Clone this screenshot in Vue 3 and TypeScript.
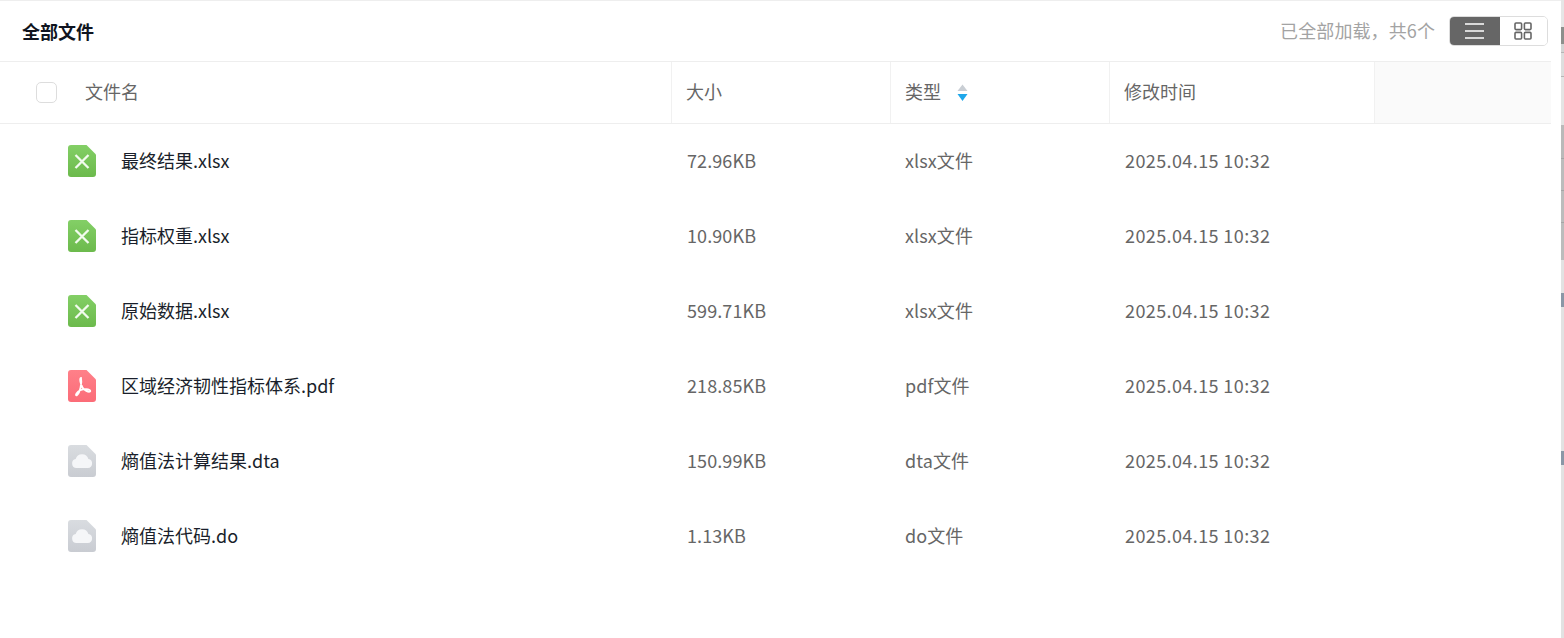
<script setup lang="ts">
type FileKind = 'xlsx' | 'pdf' | 'other'

interface FileRow {
  name: string
  size: string
  type: string
  kind: FileKind
}

const files: FileRow[] = [
  { name: '最终结果.xlsx', size: '72.96KB', type: 'xlsx文件', kind: 'xlsx' },
  { name: '指标权重.xlsx', size: '10.90KB', type: 'xlsx文件', kind: 'xlsx' },
  { name: '原始数据.xlsx', size: '599.71KB', type: 'xlsx文件', kind: 'xlsx' },
  { name: '区域经济韧性指标体系.pdf', size: '218.85KB', type: 'pdf文件', kind: 'pdf' },
  { name: '熵值法计算结果.dta', size: '150.99KB', type: 'dta文件', kind: 'other' },
  { name: '熵值法代码.do', size: '1.13KB', type: 'do文件', kind: 'other' },
]

const iconColor: Record<FileKind, string> = {
  xlsx: 'url(#g-xlsx)',
  pdf: 'url(#g-pdf)',
  other: 'url(#g-other)',
}

// the sliver of the page behind the panel, at the right edge
const edge = [
  { h: 27, c: '#e6e6e6' },
  { h: 17, c: '#8d8f8c' },
  { h: 8, c: '#d4d4d4' },
  { h: 1, c: '#b5b5b5' },
  { h: 23, c: '#dedede' },
  { h: 1, c: '#b5b5b5' },
  { h: 48, c: '#e4e4e4' },
  { h: 33, c: '#b9b9b9' },
  { h: 1, c: '#a5a5a5' },
  { h: 31, c: '#bcbcbc' },
  { h: 1, c: '#a5a5a5' },
  { h: 31, c: '#bcbcbc' },
  { h: 1, c: '#a5a5a5' },
  { h: 31, c: '#bcbcbc' },
  { h: 6, c: '#bcbcbc' },
  { h: 33, c: '#e2e2e2' },
  { h: 14, c: '#8a97a6' },
  { h: 144, c: '#e2e2e2' },
  { h: 14, c: '#8a97a6' },
  { h: 173, c: '#e2e2e2' },
]
</script>

<template>
  <div class="page">
    <div class="panel">
      <header class="top">
        <h1 class="title">全部文件</h1>
        <div class="top-right">
          <span class="loaded">已全部加载，共6个</span>
          <div class="switch">
            <button class="switch-btn active" type="button" aria-label="列表">
              <svg width="19" height="16" viewBox="0 0 19 16">
                <path d="M0 1h19M0 8h19M0 15h19" stroke="#fff" stroke-width="1.5" fill="none" />
              </svg>
            </button>
            <button class="switch-btn grid" type="button" aria-label="网格">
              <svg width="18" height="18" viewBox="0 0 18 18" fill="none" stroke="#666" stroke-width="1.6">
                <rect x="1" y="1" width="6.6" height="6.6" rx="1" />
                <rect x="10.4" y="1" width="6.6" height="6.6" rx="1" />
                <rect x="1" y="10.4" width="6.6" height="6.6" rx="1" />
                <rect x="10.4" y="10.4" width="6.6" height="6.6" rx="1" />
              </svg>
            </button>
          </div>
        </div>
      </header>

      <div class="table">
        <div class="row head">
          <div class="cell name-head">
            <span class="check"></span>
            <span>文件名</span>
          </div>
          <div class="cell divided">大小</div>
          <div class="cell divided">
            类型
            <svg class="sort" width="11" height="18" viewBox="0 0 11 18">
              <path d="M5.5 0.5 10.5 7H0.5Z" fill="#c9ced4" />
              <path d="M0.5 10H10.5L5.5 17Z" fill="#1ea7ea" />
            </svg>
          </div>
          <div class="cell divided">修改时间</div>
          <div class="cell divided filler"></div>
        </div>

        <div v-for="file in files" :key="file.name" class="row body">
          <div class="cell name-cell">
            <svg class="file-icon" width="28" height="32" viewBox="0 0 28 32">
              <defs>
                <linearGradient id="g-xlsx" x1="0" y1="0" x2="0" y2="1">
                  <stop offset="0" stop-color="#83cf66" />
                  <stop offset="1" stop-color="#6cba4c" />
                </linearGradient>
                <linearGradient id="g-pdf" x1="0" y1="0" x2="0" y2="1">
                  <stop offset="0" stop-color="#ff8089" />
                  <stop offset="1" stop-color="#fb6c78" />
                </linearGradient>
                <linearGradient id="g-other" x1="0" y1="0" x2="0" y2="1">
                  <stop offset="0" stop-color="#d9dce0" />
                  <stop offset="1" stop-color="#c9ccd2" />
                </linearGradient>
              </defs>
              <path
                d="M3 0H18.5L28 9.5V29a3 3 0 0 1-3 3H3a3 3 0 0 1-3-3V3a3 3 0 0 1 3-3Z"
                :fill="iconColor[file.kind]"
              />
              <path
                v-if="file.kind === 'xlsx'"
                d="M7.5 10 20.500 23M20.500 10 7.500 23"
                stroke="#f2fbee"
                stroke-width="2.300"
                fill="none"
              />
              <path
                v-else-if="file.kind === 'pdf'"
                d="M13 8c-1.6 0 -.6 6 1.5 9.5 1.6 2.6 6 5 7.5 4 1-1-1-2.400-4-2.300-3.500 .1-7.500 1.300-9.500 4.300-1 1.600-.4 2.300 .5 1.500 3-2.500 5.200-12 4-17Z"
                stroke="#fff"
                stroke-width="1.8"
                fill="none"
              />
              <path
                v-else
                d="M8.500 23a4.500 4.500 0 0 1-.8-8.900 6.600 6.600 0 0 1 12.700-.2A4.600 4.600 0 0 1 19.800 23Z"
                fill="#f5f6f8"
              />
            </svg>
            <span class="file-name">{{ file.name }}</span>
          </div>
          <div class="cell muted inset">{{ file.size }}</div>
          <div class="cell muted">{{ file.type }}</div>
          <div class="cell muted inset date">2025.04.15 10:32</div>
          <div class="cell"></div>
        </div>
      </div>
    </div>
    <aside class="edge">
      <i v-for="(seg, i) in edge" :key="i" :style="{ height: `${seg.h}px`, background: seg.c }"></i>
    </aside>
  </div>
</template>

<style scoped>
.page {
  display: flex;
  width: 1564px;
  height: 638px;
  overflow: hidden;
  background: #fff;
  font-family: "Noto Sans CJK SC", "Noto Sans", sans-serif;
  font-size: 18px;
}

.panel {
  width: 1561px;
  border-top: 1px solid #eee;
  box-sizing: border-box;
}

.edge {
  width: 3px;
  display: flex;
  flex-direction: column;
}

.edge i {
  display: block;
  flex: none;
}

.top {
  height: 60px;
  display: flex;
  align-items: center;
  justify-content: space-between;
  padding: 0 13px 0 22px;
}

.title {
  margin: 0;
  font-size: 18px;
  font-weight: 700;
  color: #0f1420;
}

.top-right {
  display: flex;
  align-items: center;
  gap: 14px;
}

.loaded {
  color: #a3a3a3;
  padding-bottom: 2px;
  letter-spacing: 0.1px;
}

.switch {
  display: flex;
  height: 30px;
  border-radius: 5px;
  overflow: hidden;
  box-sizing: border-box;
  border: 1px solid #ddd;
}

.switch-btn {
  width: 47px;
  padding: 0;
  border: 0;
  background: #fff;
  display: flex;
  align-items: center;
  justify-content: center;
}

.switch-btn.active {
  width: 51px;
  margin: -1px 0 -1px -1px;
  background: #666;
}

.switch-btn.grid {
  padding-right: 2px;
}

.table {
  width: 1551px;
}

.row {
  display: grid;
  grid-template-columns: 671px 219px 219px 265px 177px;
}

.row.head {
  height: 63px;
  box-sizing: border-box;
  border-top: 1px solid #eee;
  border-bottom: 1px solid #eee;
  color: #666;
}

.row.body {
  height: 75px;
}

.cell {
  display: flex;
  align-items: center;
  padding-left: 15px;
  box-sizing: border-box;
  min-width: 0;
}

.row.head .cell {
  padding-bottom: 3px;
}

.row.body .cell {
  padding-bottom: 4px;
}

.divided {
  padding-left: 14px;
  border-left: 1px solid #f1f1f1;
}

.filler {
  background: #fafafa;
}

.name-head {
  padding-left: 36px;
}

.check {
  width: 21px;
  height: 21px;
  box-sizing: border-box;
  border: 1px solid #ddd;
  border-radius: 5px;
  margin: 3px 28px 0 0;
}

.sort {
  margin: 3px 0 0 16px;
}

.cell.name-cell {
  padding-left: 68px;
}

.file-icon {
  flex: none;
  margin: 3px 25px 0 0;
}

.file-name {
  color: #1a1f2b;
}

.muted {
  color: #666;
  letter-spacing: 0.1px;
}

.inset {
  padding-left: 16px;
}

.muted.date {
  letter-spacing: 0.4px;
}
</style>
